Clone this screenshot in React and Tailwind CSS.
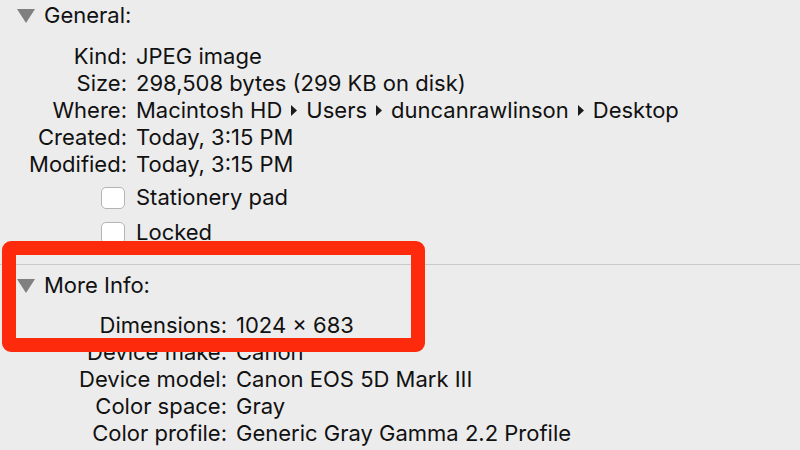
import React from "react";

const F = { fontFamily: "Inter, 'Liberation Sans', sans-serif" };

function Tri() {
  return (
    <svg width="18" height="14" viewBox="0 0 18 14" className="shrink-0">
      <polygon points="0,0 18,0 9,14" fill="#808080" />
    </svg>
  );
}

function Crumb() {
  return (
    <svg width="6" height="11" viewBox="0 0 6 11" className="mx-[9px] inline-block">
      <polygon points="0,0 6,5.5 0,11" fill="#1a1a1a" />
    </svg>
  );
}

function Row({ label, children, w }) {
  return (
    <div className="flex h-[27px] items-center">
      <div className={`${w} shrink-0 text-right`}>{label}</div>
      <div className="ml-[9px] flex items-center whitespace-nowrap">{children}</div>
    </div>
  );
}

function Check({ label }) {
  return (
    <div className="flex h-[35px] items-center pl-[101px]">
      <div className="h-[22px] w-[24px] rounded-[5px] border border-[#b4b4b4] bg-white" />
      <div className="ml-[11px]">{label}</div>
    </div>
  );
}

export default function App() {
  const g = "w-[127px]";
  const m = "w-[227px]";
  return (
    <div
      className="relative h-[450px] w-[800px] overflow-hidden bg-[#ececec] text-[22px] text-[#111111]"
      style={F}
    >
      <div className="mt-[2px] flex h-[27px] items-center pl-[17px]">
        <Tri />
        <span className="ml-[9px]">General:</span>
      </div>
      <div className="mt-[14px]">
        <Row w={g} label="Kind:">JPEG image</Row>
        <Row w={g} label="Size:">298,508 bytes (299 KB on disk)</Row>
        <Row w={g} label="Where:">
          Macintosh HD<Crumb />Users<Crumb />duncanrawlinson<Crumb />Desktop
        </Row>
        <Row w={g} label="Created:">Today, 3:15 PM</Row>
        <Row w={g} label="Modified:">Today, 3:15 PM</Row>
      </div>
      <div className="mt-[2px]">
        <Check label="Stationery pad" />
        <Check label="Locked" />
      </div>
      <div className="mt-[14px] h-px bg-[#cacaca]" />
      <div className="mt-[7px] flex h-[27px] items-center pl-[17px]">
        <Tri />
        <span className="ml-[9px]">More Info:</span>
      </div>
      <div className="mt-[13px]">
        <Row w={m} label="Dimensions:">1024 × 683</Row>
        <Row w={m} label="Device make:">Canon</Row>
        <Row w={m} label="Device model:">Canon EOS 5D Mark III</Row>
        <Row w={m} label="Color space:">Gray</Row>
        <Row w={m} label="Color profile:">Generic Gray Gamma 2.2 Profile</Row>
      </div>
      <div className="absolute left-[2px] top-[241px] h-[111px] w-[423px] rounded-[9px] border-[14px] border-[#fe2a0c]" />
    </div>
  );
}
